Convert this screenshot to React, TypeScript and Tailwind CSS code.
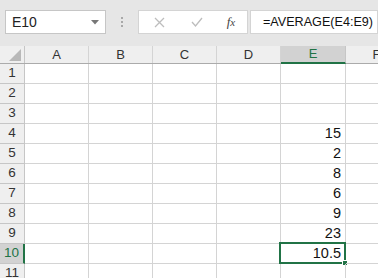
import React from 'react';

const cols = ['A', 'B', 'C', 'D', 'E', 'F'];
const widths = [64, 64, 64, 64, 65, 62];
const values: Record<number, string> = { 4: '15', 5: '2', 6: '8', 7: '6', 8: '9', 9: '23', 10: '10.5' };

export default function App() {
  const rows = Array.from({ length: 11 }, (_, i) => i + 1);

  return (
    <div
      className="w-[378px] h-[278px] overflow-hidden bg-white text-[#222]"
      style={{ fontFamily: '"Liberation Sans", Arial, sans-serif' }}
    >
      {/* formula bar */}
      <div className="h-[46px] bg-[#e6e6e6] pt-[10px] flex items-start">
        <div className="shrink-0 ml-[5px] w-[101px] h-[24px] bg-white border border-[#c6c6c6] flex items-center pl-[6px] pr-[6px] text-[14px]">
          <span className="flex-1">E10</span>
          <svg width="8" height="5" viewBox="0 0 8 5">
            <path d="M0 0 L8 0 L4 4.5 Z" fill="#777" />
          </svg>
        </div>
        <div className="shrink-0 w-[32px] h-[24px] flex flex-col items-center justify-center gap-[2px]">
          <span className="w-[2px] h-[2px] bg-[#a8a8a8]" />
          <span className="w-[2px] h-[2px] bg-[#a8a8a8]" />
          <span className="w-[2px] h-[2px] bg-[#a8a8a8]" />
        </div>
        <div className="shrink-0 w-[110px] h-[24px] bg-white border border-[#d4d4d4] flex items-center">
          <div className="w-[40px] flex justify-center">
            <svg width="11" height="11" viewBox="0 0 11 11">
              <path d="M1 1 L10 10 M10 1 L1 10" stroke="#bdbdbd" strokeWidth="1.3" />
            </svg>
          </div>
          <div className="w-[36px] flex justify-center">
            <svg width="12" height="10" viewBox="0 0 12 10">
              <path d="M1 5 L4.5 9 L11 1" stroke="#bdbdbd" strokeWidth="1.3" fill="none" />
            </svg>
          </div>
          <div
            className="flex-1 text-center text-[13px] italic text-[#444]"
            style={{ fontFamily: '"Liberation Serif", "Times New Roman", serif' }}
          >
            f<span className="text-[11px]">x</span>
          </div>
        </div>
        <div className="ml-[2px] min-w-0 flex-1 h-[24px] bg-white border border-[#d4d4d4] flex items-center pl-[12px] text-[12.6px] text-[#111] overflow-hidden whitespace-nowrap">
          =AVERAGE(E4:E9)
        </div>
      </div>

      {/* header row */}
      <div className="flex h-[18px] bg-[#efefef] border-b border-[#ababab]">
        <div className="w-[25px] shrink-0 border-r border-[#c6c6c6] flex items-end justify-end pr-[3px] pb-[2px]">
          <svg width="12" height="12" viewBox="0 0 12 12">
            <path d="M12 0 L12 12 L0 12 Z" fill="#b8b8b8" />
          </svg>
        </div>
        {cols.map((c, i) => (
          <div
            key={c}
            style={{ width: widths[i] }}
            className={
              c === 'E'
                ? 'shrink-0 h-[18px] bg-[#d2d2d2] border-r border-[#c6c6c6] border-b-2 border-b-[#217346] text-[#217346] text-[13px] flex items-center justify-center'
                : 'shrink-0 h-[17px] border-r border-[#d4d4d4] text-[13px] text-[#333] flex items-center justify-center'
            }
          >
            {c}
          </div>
        ))}
      </div>

      {/* rows */}
      {rows.map((r) => (
        <div key={r} className="flex h-[20px]">
          <div
            className={
              r === 10
                ? 'w-[25px] shrink-0 bg-[#d2d2d2] border-r-2 border-r-[#217346] border-b border-[#c6c6c6] text-[#217346] text-[13.5px] flex items-center justify-center'
                : 'w-[25px] shrink-0 bg-[#efefef] border-r border-[#ababab] border-b border-[#c6c6c6] text-[13.5px] text-[#333] flex items-center justify-center'
            }
          >
            {r}
          </div>
          {cols.map((c, i) => (
            <div
              key={c}
              style={{ width: widths[i] }}
              className="relative shrink-0 border-r border-b border-[#d4d4d4] flex items-center justify-end pr-[4px] text-[14.5px] text-[#111]"
            >
              {c === 'E' ? values[r] : ''}
              {c === 'E' && r === 10 && (
                <div className="absolute left-[-2px] top-[-2px] right-[-1px] bottom-[-1px] border-2 border-[#217346]">
                  <div className="absolute right-[-4px] bottom-[-4px] w-[6px] h-[6px] bg-[#217346] border border-white" />
                </div>
              )}
            </div>
          ))}
        </div>
      ))}
    </div>
  );
}
